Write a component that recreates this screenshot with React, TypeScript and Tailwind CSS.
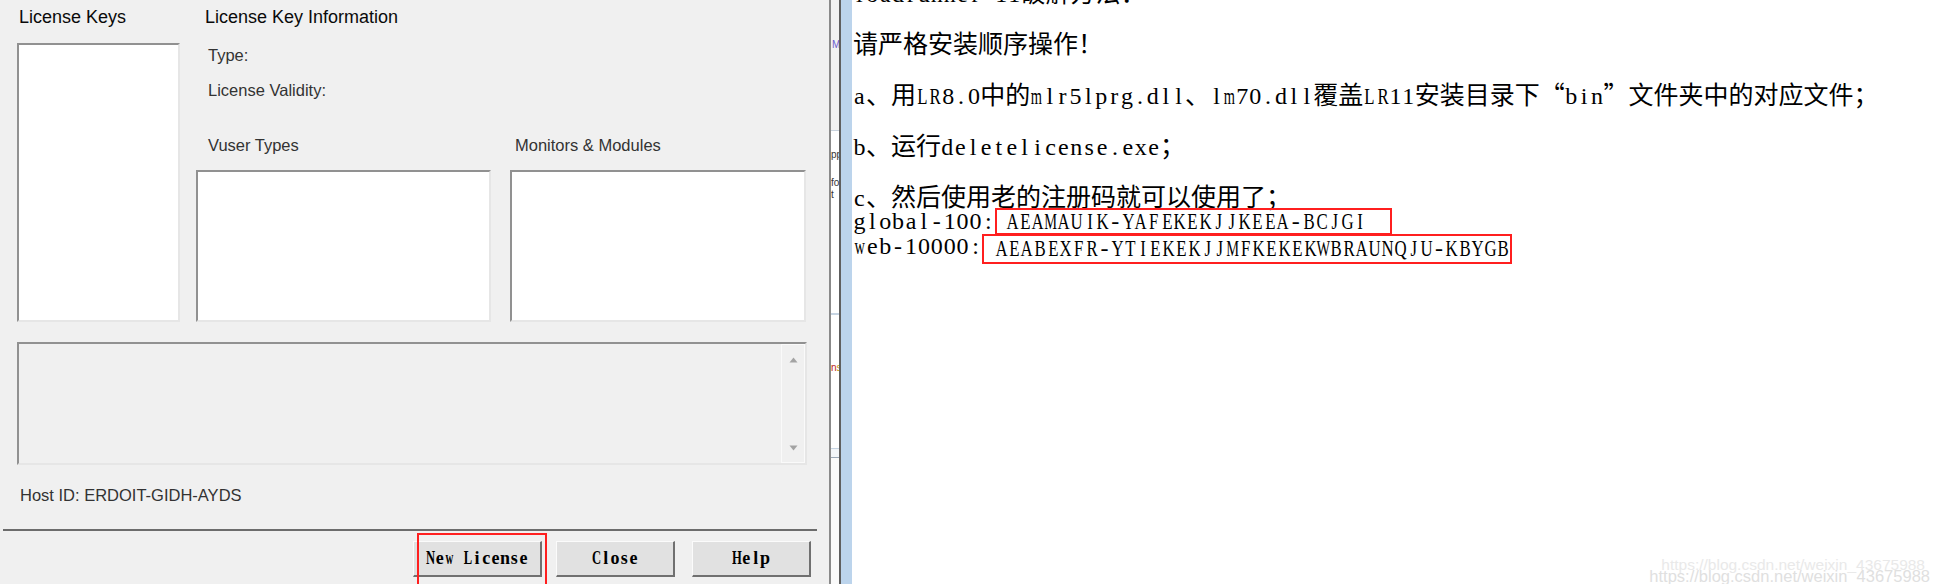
import React from "react";

const LATIN = "font-['Liberation_Serif',serif] text-[24px]";
const CJK = "font-['Noto_Sans_CJK_SC',sans-serif] text-[25px]";

function glyphClass(ch: string) {
  if (/[MWmw]/.test(ch)) return "inline-block scale-x-[0.6]";
  if (/[A-Z]/.test(ch)) return "inline-block scale-x-[0.7]";
  return "inline-block";
}

function SerifMono({ text, btn }: { text: string; btn?: boolean }) {
  return (
    <>
      {Array.from(text).map((ch, i) => (
        <span
          key={i}
          className={
            btn
              ? "inline-flex justify-center w-[9.3px]"
              : "inline-flex justify-center w-[12.9px]"
          }
        >
          <span className={glyphClass(ch)}>{ch === " " ? "\u00a0" : ch}</span>
        </span>
      ))}
    </>
  );
}

function Mixed({ text }: { text: string }) {
  const parts = text.split(/([\x00-\x7F]+)/).filter((p) => p.length > 0);
  return (
    <>
      {parts.map((p, i) =>
        /^[\x00-\x7F]+$/.test(p) ? (
          <span key={i} className={LATIN}>
            <SerifMono text={p} />
          </span>
        ) : (
          <span key={i} className={CJK}>
            {p}
          </span>
        )
      )}
    </>
  );
}

function Line({ text }: { text?: string }) {
  return (
    <div className="h-[25.5px] leading-[25.5px] whitespace-nowrap">
      {text ? <Mixed text={text} /> : null}
    </div>
  );
}

const SUNKEN =
  "border-2 border-t-[#919191] border-l-[#919191] border-r-[#e6e6e6] border-b-[#e6e6e6]";

function Arrow({ up }: { up?: boolean }) {
  return (
    <svg width="9" height="6" viewBox="0 0 9 6">
      {up ? (
        <polygon points="4.5,0.5 8.5,5.5 0.5,5.5" fill="#a3a3a3" />
      ) : (
        <polygon points="0.5,0.5 8.5,0.5 4.5,5.5" fill="#a3a3a3" />
      )}
    </svg>
  );
}

function Button({ label, className }: { label: string; className: string }) {
  return (
    <div
      className={`h-[36px] bg-[#e1e1e1] border-t border-l border-t-[#fbfbfb] border-l-[#fbfbfb] border-r-2 border-b-2 border-r-[#707070] border-b-[#707070] flex items-center justify-center font-['Liberation_Serif',serif] font-bold text-[18px] text-black whitespace-nowrap ${className}`}
    >
      <SerifMono text={label} btn />
    </div>
  );
}

function LeftPanel() {
  return (
    <div className="w-[829px] shrink-0 h-full bg-[#f0f0f0] flex flex-col font-['Liberation_Sans',Arial,sans-serif]">
      <div className="flex pl-[17px] gap-[16px]">
        <div className="w-[163px] flex flex-col">
          <div className="h-[43px] pt-[5px] leading-[24px] text-[18px] text-[#0a0a0a] pl-[2px] whitespace-nowrap">
            License Keys
          </div>
          <div className={`h-[279px] bg-white ${SUNKEN}`} />
        </div>
        <div className="w-[610px] flex flex-col">
          <div className="h-[43px] pt-[5px] leading-[24px] text-[18px] text-[#0a0a0a] pl-[9px] whitespace-nowrap">
            License Key Information
          </div>
          <div className="h-[24px] leading-[24px] text-[16.5px] text-[#333] pl-[12px]">Type:</div>
          <div className="mt-[11px] h-[24px] leading-[24px] text-[16.5px] text-[#333] pl-[12px]">
            License Validity:
          </div>
          <div className="mt-[31px] flex gap-[19px]">
            <div className="w-[295px] flex flex-col">
              <div className="h-[24px] leading-[24px] text-[16.5px] text-[#333] pl-[12px]">Vuser Types</div>
              <div className={`mt-[13px] h-[152px] bg-white ${SUNKEN}`} />
            </div>
            <div className="w-[296px] flex flex-col">
              <div className="h-[24px] leading-[24px] text-[16.5px] text-[#333] pl-[5px] whitespace-nowrap">
                Monitors &amp; Modules
              </div>
              <div className={`mt-[13px] h-[152px] bg-white ${SUNKEN}`} />
            </div>
          </div>
        </div>
      </div>

      <div className={`mt-[20px] ml-[17px] w-[790px] h-[123px] bg-[#f0f0f0] flex justify-end ${SUNKEN}`}>
        <div className="w-[24px] h-full border border-[#fafafa] flex flex-col items-center justify-between pt-[12px] pb-[11px]">
          <Arrow up />
          <Arrow />
        </div>
      </div>

      <div className="mt-[18px] h-[24px] leading-[24px] text-[16.5px] text-[#333] pl-[20px] whitespace-nowrap">
        Host ID: ERDOIT-GIDH-AYDS
      </div>

      <div className="mt-[22px] ml-[3px] w-[814px] h-[2px] bg-[#6c6c6c]" />

      <div className="mt-[10px] flex">
        <div className="relative ml-[413px]">
          <Button label="New License" className="w-[129px]" />
          <div className="absolute left-[4px] top-[-8px] w-[130px] h-[60px] border-2 border-[#ff1f1f]" />
        </div>
        <Button label="Close" className="ml-[14px] w-[119px]" />
        <Button label="Help" className="ml-[17px] w-[119px]" />
      </div>
    </div>
  );
}

function Strip() {
  return (
    <div className="w-[8px] shrink-0 h-full flex flex-col overflow-hidden bg-[#fafafa] text-[10px] leading-[12px] font-['Liberation_Sans',sans-serif] whitespace-nowrap">
      <div className="h-[130px] bg-[#f2f2f2] pt-[39px] pl-[1px] text-[#6a5acd]">M</div>
      <div className="h-px bg-[#c8d2dd]" />
      <div className="h-[182px] bg-white pt-[18px] text-[#333]">
        <div>pp</div>
        <div className="mt-[16px]">fo</div>
        <div>t</div>
      </div>
      <div className="h-[2px] bg-[#c6d4e2]" />
      <div className="h-[133px] bg-white pt-[47px]">
        <span className="text-[#b22]">n</span>
        <span className="text-[#c90]">s</span>
      </div>
      <div className="h-px bg-[#c6d4e2]" />
      <div className="h-[8px] bg-[#f3f6f9]" />
      <div className="h-px bg-[#9aa7b5]" />
      <div className="flex-1 bg-[#fafafa]" />
    </div>
  );
}

function RightPage() {
  return (
    <div className="relative flex-1 h-full bg-white overflow-hidden pl-[1px] text-black">
      <div className="-mt-[21px] flex flex-col">
        <Line text="loadrunner 11破解方法：" />
        <Line />
        <Line text="请严格安装顺序操作！" />
        <Line />
        <Line text="a、用LR8.0中的mlr5lprg.dll、lm70.dll覆盖LR11安装目录下“bin”文件夹中的对应文件；" />
        <Line />
        <Line text="b、运行deletelicense.exe；" />
        <Line />
        <Line text="c、然后使用老的注册码就可以使用了；" />
        <div className={`h-[25.5px] leading-[25.5px] flex items-center whitespace-nowrap ${LATIN}`}>
          <span className="shrink-0">
            <SerifMono text="global-100:" />
          </span>
          <span className="shrink-0 h-[27px] w-[397px] border-2 border-[#ff1f1f] pl-[9px] flex items-center">
            <SerifMono text="AEAMAUIK-YAFEKEKJJKEEA-BCJGI" />
          </span>
        </div>
        <div className={`h-[25.5px] leading-[25.5px] flex items-center whitespace-nowrap ${LATIN}`}>
          <span className="shrink-0">
            <SerifMono text="web-10000:" />
          </span>
          <span className="shrink-0 h-[30px] w-[530px] translate-y-[2px] border-2 border-[#ff1f1f] pl-[11px] flex items-center">
            <SerifMono text="AEABEXFR-YTIEKEKJJMFKEKEKWBRAUNQJU-KBYGB" />
          </span>
        </div>
      </div>

      <div className="absolute right-[10px] top-[556px] text-[15.5px] leading-[18px] text-[#e9e9e9] font-['Liberation_Sans',sans-serif] whitespace-nowrap">
        https://blog.csdn.net/weixin_43675988
      </div>
      <div className="absolute right-[5px] top-[567px] text-[16.5px] leading-[18px] text-[#e0e0e0] font-['Liberation_Sans',sans-serif] whitespace-nowrap">
        https://blog.csdn.net/weixin_43675988
      </div>
    </div>
  );
}

export default function App() {
  return (
    <div className="w-[1935px] h-[584px] flex overflow-hidden bg-white">
      <LeftPanel />
      <div className="w-[2px] shrink-0 h-full bg-[#8a8a8a]" />
      <Strip />
      <div className="w-[2px] shrink-0 h-full bg-[#5f5f5f]" />
      <div className="w-[11px] shrink-0 h-full bg-[#bcd4ec]" />
      <RightPage />
    </div>
  );
}
